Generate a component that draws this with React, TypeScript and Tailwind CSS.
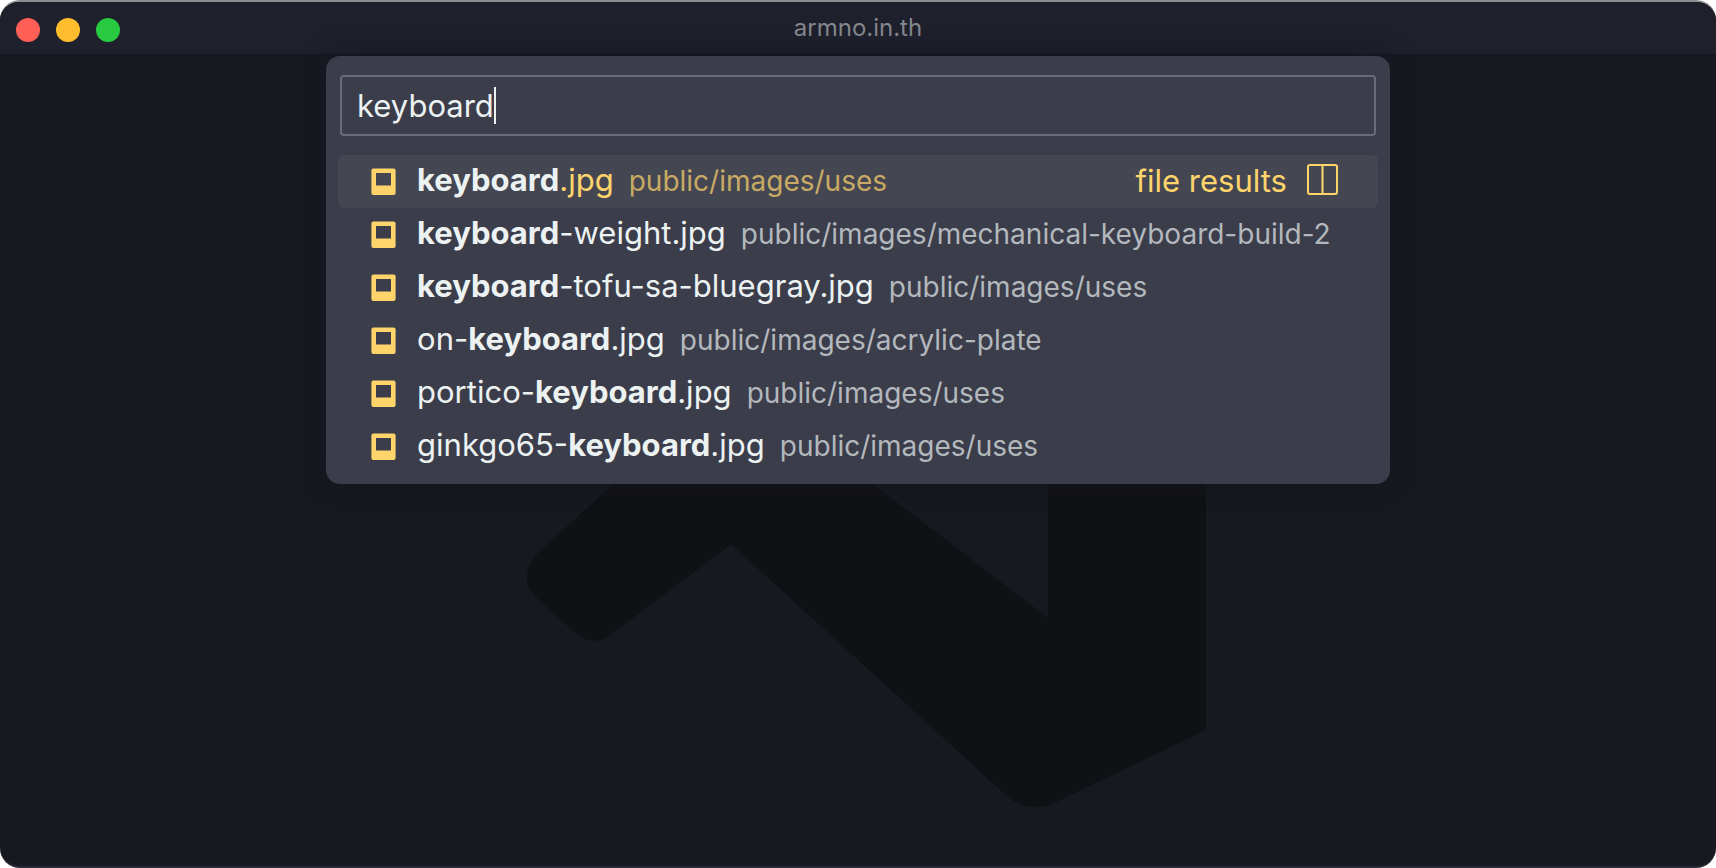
import { useState } from "react";

type Result = { before: string; match: string; after: string; path: string };

const results: Result[] = [
  { before: "", match: "keyboard", after: ".jpg", path: "public/images/uses" },
  { before: "", match: "keyboard", after: "-weight.jpg", path: "public/images/mechanical-keyboard-build-2" },
  { before: "", match: "keyboard", after: "-tofu-sa-bluegray.jpg", path: "public/images/uses" },
  { before: "on-", match: "keyboard", after: ".jpg", path: "public/images/acrylic-plate" },
  { before: "portico-", match: "keyboard", after: ".jpg", path: "public/images/uses" },
  { before: "ginkgo65-", match: "keyboard", after: ".jpg", path: "public/images/uses" },
];

function ImageFileIcon() {
  return (
    <svg className="h-7 w-[25px] shrink-0" viewBox="0 0 25 28" aria-hidden="true">
      <path
        fill="#ffd56b"
        fillRule="evenodd"
        d="M2.400 0.400h20.200a2 2 0 0 1 2 2v22.600a2 2 0 0 1-2 2H2.400a2 2 0 0 1-2-2V2.400a2 2 0 0 1 2-2ZM5 5.100v12.300h15V5.100Z"
      />
    </svg>
  );
}

function SplitIcon() {
  return (
    <svg className="size-[31px]" viewBox="0 0 31 31" fill="none" stroke="#ffd56b" strokeWidth="2" aria-hidden="true">
      <rect x="1" y="1" width="29" height="29" rx="2" />
      <path d="M15.500 1v29" />
    </svg>
  );
}

function EditorWatermark() {
  return (
    <svg
      className="absolute inset-0 size-full"
      viewBox="0 54 1716 812"
      preserveAspectRatio="xMidYMin meet"
      aria-hidden="true"
    >
      <path
        fill="#101115"
        d="M613 484L537 554Q527 564 527 577Q527 589 537 598L574 632Q594 649 613 633L731 544L1007 796Q1018 807 1036 807Q1047 807 1056 802L1206 730V450H1048V618L873 484L830 450H650Z"
      />
    </svg>
  );
}

export default function App() {
  const [query, setQuery] = useState("keyboard");

  return (
    <div className="flex min-h-screen flex-col overflow-hidden rounded-[20px] border-t-2 border-b-2 border-t-[#8c8d90] border-b-[#292a38] bg-[#161920] font-['Inter','Liberation_Sans',sans-serif]">
      <header className="grid h-[52px] grid-cols-3 bg-[#1e202c] px-4">
        <div className="flex gap-4 pt-4">
          <button type="button" aria-label="Close" className="size-6 rounded-full bg-[#ff5f57]" />
          <button type="button" aria-label="Minimize" className="size-6 rounded-full bg-[#ffbd2e]" />
          <button type="button" aria-label="Zoom" className="size-6 rounded-full bg-[#28ca42]" />
        </div>
        <h1 className="pt-2.5 text-center text-2xl leading-8 text-[#85878d]">armno.in.th</h1>
      </header>

      <main className="relative grow pt-0.5">
        <EditorWatermark />
        <section
          aria-label="Quick open"
          className="relative mx-auto w-[62%] rounded-[14px] bg-[#3b3d4b] px-3 pt-[19px] pb-[11px] shadow-[0_0_24px_#15181e]"
        >
          <div className="mx-0.5 flex h-[61px] items-center rounded border-2 border-[#696c76] px-[15px]">
            <input
              type="text"
              aria-label="Search files by name"
              value={query}
              onChange={(e) => setQuery(e.target.value)}
              className="field-sizing-content bg-transparent text-[31px] leading-9 text-[#ecf2f1] caret-transparent outline-none"
            />
            <span className="h-[37px] w-0.5 bg-[#ecf2f1]" />
          </div>

          <ul className="mt-[19px] text-[31px] text-[#ecf2f1]">
            {results.map((r, i) => (
              <li
                key={r.before + r.after}
                className={
                  i === 0
                    ? "flex h-[53px] items-center rounded-md bg-[#444752] pr-10 pl-[33px] text-[#ffd56b]"
                    : "flex h-[53px] items-center pr-10 pl-[33px]"
                }
              >
                <button type="button" className="flex grow items-center gap-[21px] text-left whitespace-nowrap">
                  <ImageFileIcon />
                  <span className="flex items-baseline gap-[15px] pb-0.5 leading-10">
                    <span>
                      {r.before}
                      <b className="font-bold text-[#ecf2f1]">{r.match}</b>
                      {r.after}
                    </span>
                    <span className={i === 0 ? "text-[28px] text-[#c8aa64]" : "text-[28px] text-[#b3b8bd]"}>
                      {r.path}
                    </span>
                  </span>
                </button>
                {i === 0 && (
                  <div className="flex items-center gap-5 pb-0.5 leading-10">
                    <span>file results</span>
                    <button type="button" aria-label="Open to the side" className="pb-0.5">
                      <SplitIcon />
                    </button>
                  </div>
                )}
              </li>
            ))}
          </ul>
        </section>
      </main>
    </div>
  );
}
